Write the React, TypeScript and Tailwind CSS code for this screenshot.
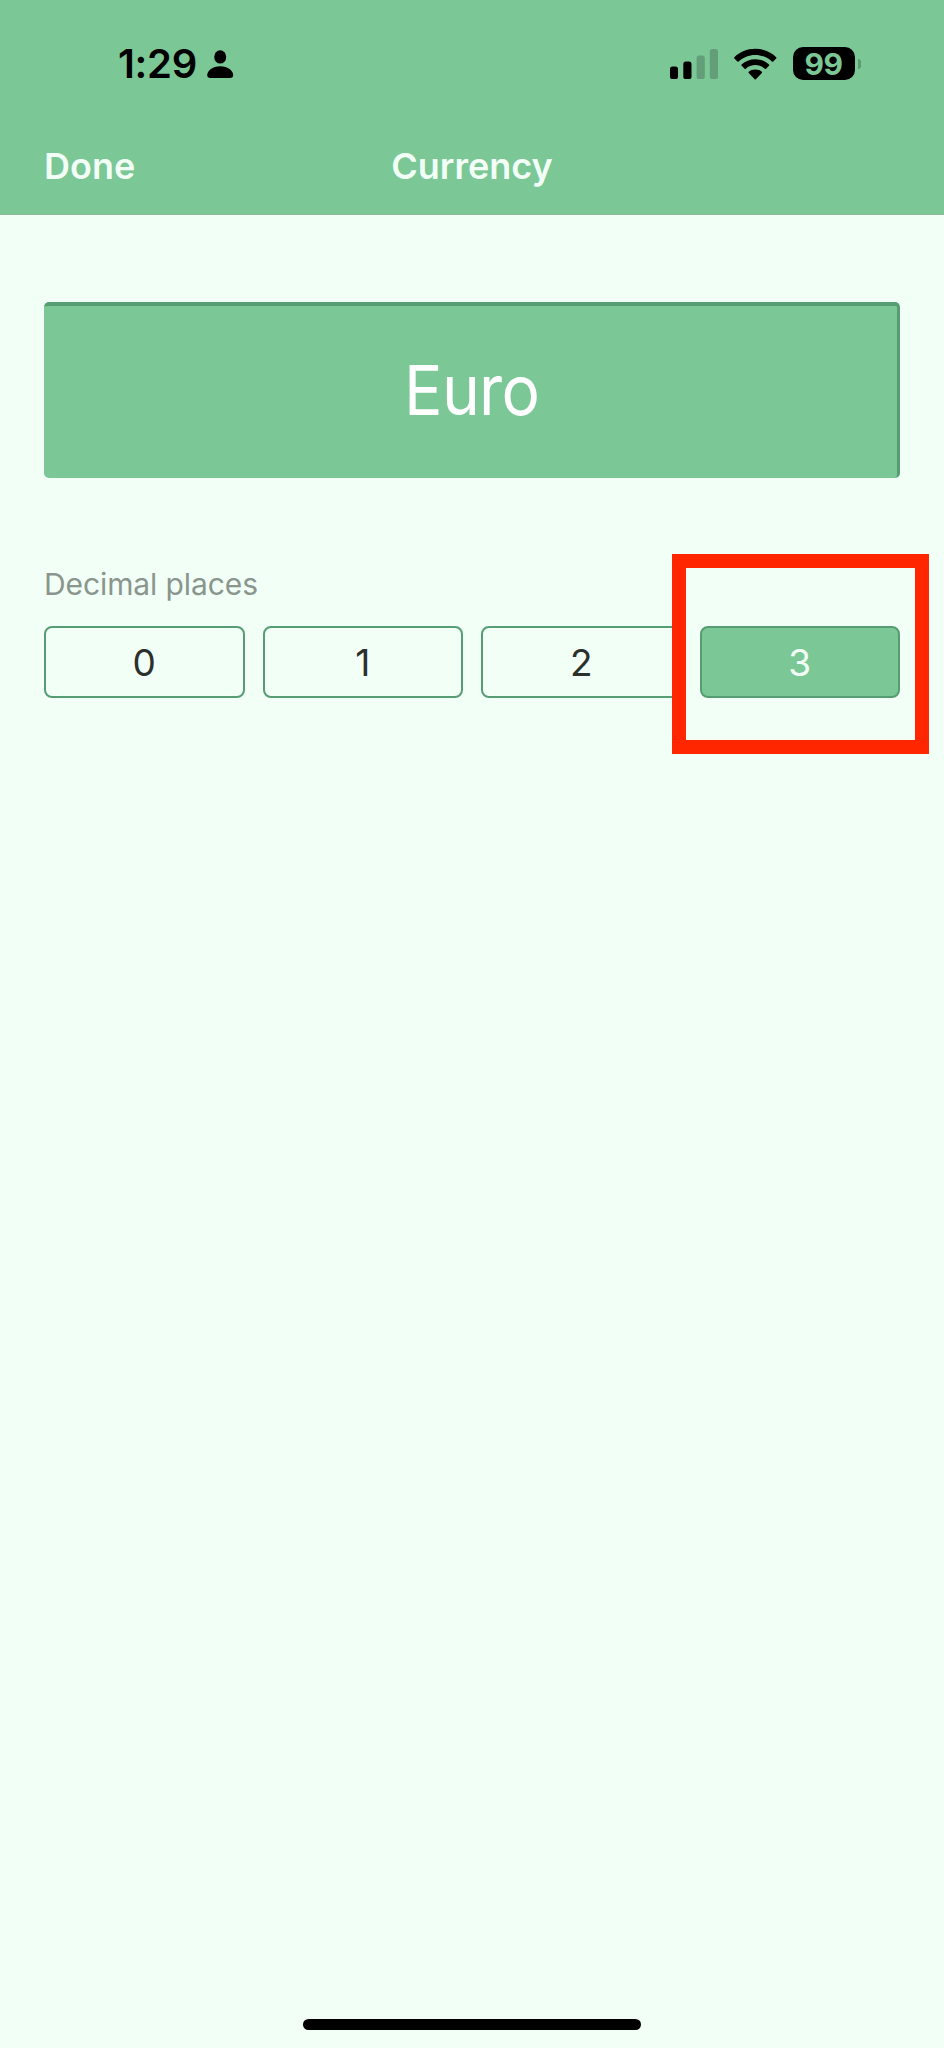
const places = [0, 1, 2, 3];
const selected = 3;

function PersonIcon() {
  return (
    <svg className="ml-[10px] h-[30px] w-[27px]" viewBox="0 0 27 30">
      <ellipse cx="13.2" cy="7.9" rx="6" ry="6.7" />
      <path d="M3.6 29C1.2 29 .2 27.8.2 26 .2 21.800 5.400 17.200 13.200 17.200S26.200 21.800 26.200 26C26.200 27.800 25.200 29 22.800 29Z" />
    </svg>
  );
}

function SignalIcon() {
  return (
    <svg className="h-[32px] w-[48px]" viewBox="0 0 48 32">
      <rect x="0" y="18.500" width="8" height="12.500" rx="2.600" />
      <rect x="13.300" y="13.500" width="8.200" height="17.500" rx="2.600" />
      <rect x="26.600" y="7.500" width="8.200" height="23.500" rx="2.600" fillOpacity=".2" />
      <rect x="39.800" y="1" width="8.200" height="30" rx="2.600" fillOpacity=".2" />
    </svg>
  );
}

function WifiIcon() {
  return (
    <svg className="ml-[16px] h-[32px] w-[43px]" viewBox="0 0 43 32">
      <path d="M21.300 .8C29.600 .8 37 4 42.200 9.300Q42.700 9.900 42.200 10.500L39.200 13.500Q38.500 14.100 37.900 13.500C33.500 9.300 27.700 6.900 21.300 6.900S9.100 9.300 4.700 13.500Q4.100 14.100 3.400 13.500L.4 10.500Q-.1 9.900 .4 9.300C5.600 4 13 .8 21.300 .8Z" />
      <path d="M21.300 11.200C26.700 11.200 31.400 13.200 35 16.500Q35.600 17.100 35 17.700L32 20.700Q31.400 21.200 30.800 20.700C28.200 18.400 24.900 17.100 21.300 17.100S14.400 18.400 11.800 20.700Q11.200 21.200 10.600 20.700L7.600 17.700Q7 17.100 7.600 16.500C11.200 13.200 15.900 11.200 21.300 11.200Z" />
      <path d="M21.300 21.400C24 21.400 26.200 22.300 27.900 23.700Q28.400 24.300 27.900 24.900L21.900 31.200Q21.300 31.700 20.700 31.200L14.700 24.900Q14.200 24.300 14.700 23.700C16.400 22.300 18.600 21.400 21.300 21.400Z" />
    </svg>
  );
}

function Battery() {
  return (
    <div className="ml-[16px] flex items-center">
      <div className="flex h-[33px] w-[62px] items-center justify-center rounded-[10px] bg-black text-[30px] font-bold leading-none tracking-[-0.600px] text-[#7bc796]">
        99
      </div>
      <div className="ml-[3px] h-[10px] w-[3.500px] rounded-r-full bg-[#5c9a72]" />
    </div>
  );
}

export default function App() {
  return (
    <div className="flex h-[2048px] w-[944px] flex-col bg-[#f1fff7] font-['Inter','Liberation_Sans',sans-serif]">
      <header className="h-[215px] border-b border-[#8dba9c] bg-[#7bc796]">
        <div className="flex h-[127px] items-center justify-between pl-[118px] pr-[83px] text-black">
          <div className="flex items-center">
            <span className="text-[40px] font-semibold leading-none tracking-[-0.300px]">1:29</span>
            <PersonIcon />
          </div>
          <div className="flex items-center">
            <SignalIcon />
            <WifiIcon />
            <Battery />
          </div>
        </div>
        <div className="grid grid-cols-3 items-center px-[44px] pt-[17px] text-[36px] font-semibold leading-[44px] text-[#f2fff7]">
          <button className="text-left">Done</button>
          <h1 className="text-center">Currency</h1>
        </div>
      </header>

      <main className="flex-1 px-[44px] pt-[87px]">
        <button className="flex h-[176px] w-full items-center justify-center rounded-[5px] border-r-[3px] border-t-[4px] border-[#579d74] bg-[#7bc796] pb-[3px] pl-[2px] text-[69px] leading-none tracking-[-0.800px] text-white">
          <span className="scale-x-[0.93]">Euro</span>
        </button>
        <p className="mt-[87px] text-[30px] leading-[38px] tracking-[-0.100px] text-[#8a958d]">Decimal places</p>
        <div className="mt-[23px] grid grid-cols-4 gap-[18px]">
          {places.map((n) => (
            <div key={n} className="relative">
              <button
                className={
                  n === selected
                    ? "h-[72px] w-full rounded-[8px] border-2 border-[#579d74] bg-[#7bc796] text-[37px] leading-none text-[#f2fff7]"
                    : "h-[72px] w-full rounded-[8px] border-2 border-[#579d74] text-[37px] leading-none text-[#2b302d]"
                }
              >
                {n}
              </button>
              {n === selected && (
                <div className="pointer-events-none absolute -bottom-[56px] -left-[28px] -right-[29px] -top-[72px] border-[14.500px] border-[#ff2600]" />
              )}
            </div>
          ))}
        </div>
      </main>

      <footer className="flex justify-center pb-[18px]">
        <div className="h-[11px] w-[338px] rounded-full bg-black" />
      </footer>
    </div>
  );
}
